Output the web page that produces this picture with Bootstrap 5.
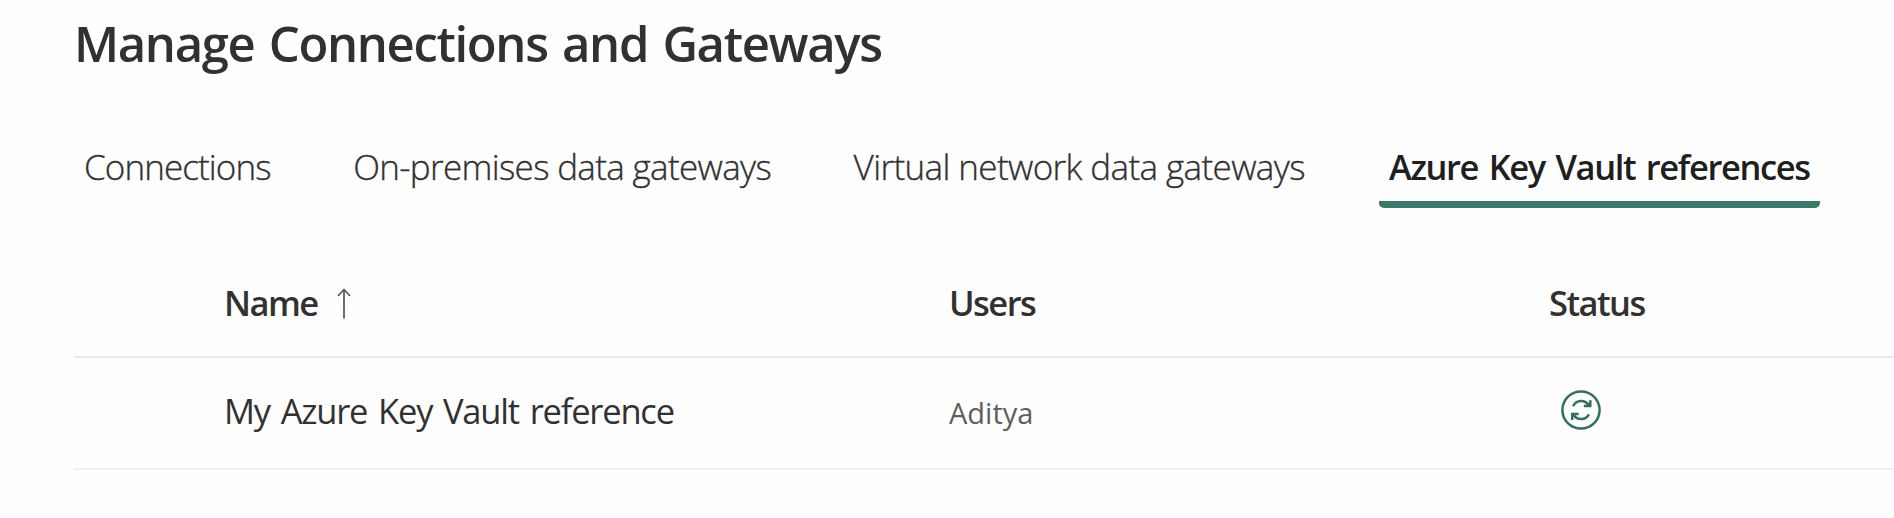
<!DOCTYPE html>
<html lang="en">
<head>
<meta charset="utf-8">
<meta name="viewport" content="width=device-width, initial-scale=1">
<title>Manage Connections and Gateways</title>
<link href="https://cdn.jsdelivr.net/npm/bootstrap@5.3.0/dist/css/bootstrap.min.css" rel="stylesheet">
<style>
body{font-family:"Open Sans","Noto Sans",sans-serif;color:#323130;background:#fefefe;overflow:hidden}
.page{padding:9px 0 0 74px}
.page-title{font-size:49px;line-height:68px;font-weight:600;letter-spacing:-1.35px;word-spacing:3px}
.tabs{width:1746px;margin-top:56px;gap:62.5px}
.tabs .nav-link{font-size:35px;line-height:48px;font-weight:300;letter-spacing:-.62px;color:#323130;padding:10px;white-space:nowrap;-webkit-text-stroke:.35px currentColor}
.tabs .nav-link:first-child{letter-spacing:-.9px}
.tabs .nav-link:nth-child(2){letter-spacing:-.67px}
.tabs .nav-link.active{position:relative;font-size:34.5px;font-weight:600;letter-spacing:-1.38px;word-spacing:3px;color:#201f1e;-webkit-text-stroke:0;margin-left:auto;width:441px}
.tabs .nav-link.active::after{content:"";position:absolute;left:0;right:0;top:100%;height:7px;background:#37796a;border-radius:0 0 5px 5px}
.refs{table-layout:fixed;width:1820px;margin-top:77px;color:#323130;--bs-table-bg:transparent}
.refs th,.refs td{font-size:34.5px;line-height:48px;vertical-align:top;white-space:nowrap;border:0 solid #f1f1f1;border-bottom-width:2px;color:#323130}
.refs th{font-weight:600;padding:1px 0 29px;letter-spacing:-1.55px;border-color:#eaeaea}
.refs td{padding:29px 0 33px;letter-spacing:-1.2px;word-spacing:3px}
.refs td.user{font-size:29px;padding-top:31px;padding-bottom:31px;letter-spacing:0;color:#605e5c}
.refs td.state{padding:32px 0 0 12px}
.c-select{width:150px}.c-name{width:725px}.c-users{width:600px}
.sort-arrow{margin:8px 0 0 17px}
</style>
</head>
<body>
<main class="page">
  <h1 class="page-title mb-0">Manage Connections and Gateways</h1>
  <nav class="nav flex-nowrap tabs">
    <a class="nav-link" href="#">Connections</a>
    <a class="nav-link" href="#">On-premises data gateways</a>
    <a class="nav-link" href="#">Virtual network data gateways</a>
    <a class="nav-link active" aria-current="page" href="#">Azure Key Vault references</a>
  </nav>
  <table class="table refs mb-0">
    <colgroup><col class="c-select"><col class="c-name"><col class="c-users"><col></colgroup>
    <thead>
      <tr>
        <th></th>
        <th><div class="d-flex">Name<svg class="sort-arrow" width="18" height="32" viewBox="0 0 18 32" fill="none" stroke="#605e5c" stroke-width="1.8" aria-hidden="true"><path d="M9 31.500V2.500M3 9 9 2.500 15 9"/></svg></div></th>
        <th>Users</th>
        <th>Status</th>
      </tr>
    </thead>
    <tbody>
      <tr>
        <td></td>
        <td>My Azure Key Vault reference</td>
        <td class="user">Aditya</td>
        <td class="state"><svg class="d-block" width="40" height="40" viewBox="0 0 40 40" fill="none" stroke="#31705f" stroke-width="2.5" aria-label="Online"><circle cx="20" cy="20" r="18.600"/><path d="M12 16.300C15.500 9.500 24 9.500 28 15.500M29.300 10.200V16H22.800M28 24.300C24.500 30.500 16.500 30.500 12.500 25M11.200 30V24H17.700"/></svg></td>
      </tr>
    </tbody>
  </table>
</main>
<script src="https://cdn.jsdelivr.net/npm/bootstrap@5.3.0/dist/js/bootstrap.bundle.min.js"></script>
</body>
</html>
